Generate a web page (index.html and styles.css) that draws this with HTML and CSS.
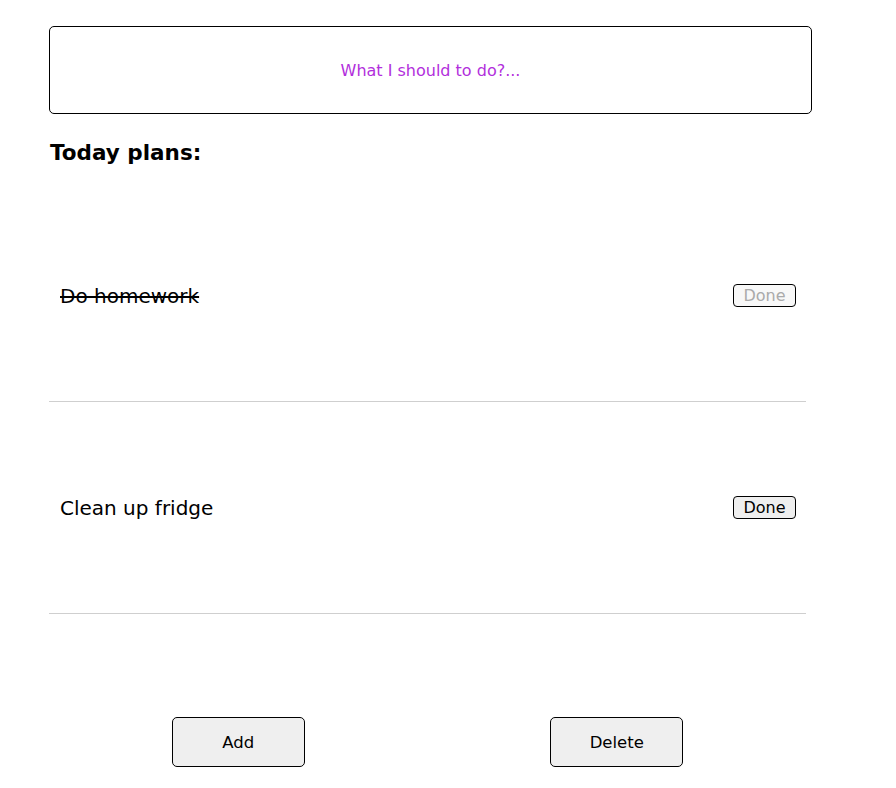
FILE: index.html
```html
<!DOCTYPE html>
<html>
<head>
<meta charset="utf-8">
<link rel="stylesheet" href="styles.css">
</head>
<body>
<div class="app">
  <input class="task-input" type="text" placeholder="What I should to do?...">
  <h2 class="title">Today plans:</h2>
  <ul class="list">
    <li class="item">
      <span class="item-text done">Do homework</span>
      <button class="done-btn" disabled>Done</button>
    </li>
    <li class="item">
      <span class="item-text">Clean up fridge</span>
      <button class="done-btn">Done</button>
    </li>
  </ul>
  <div class="actions">
    <button class="action-btn">Add</button>
    <button class="action-btn">Delete</button>
  </div>
</div>
</body>
</html>
```

FILE: styles.css
```css
* { box-sizing: border-box; }
html, body { margin: 0; padding: 0; background: #fff; }
body {
  font-family: "DejaVu Sans", "Open Sans", sans-serif;
  color: #000;
}
.app {
  width: 763px;
  margin: 26px 0 0 49px;
}
.task-input {
  display: block;
  width: 763px;
  height: 88px;
  border: 1px solid #000;
  border-radius: 5px;
  text-align: center;
  font-family: inherit;
  font-size: 16px;
  outline: none;
}
.task-input::placeholder { color: #b22fdc; opacity: 1; }
.title {
  margin: 26px 0 0 1px;
  font-size: 21.5px;
  font-weight: 700;
  line-height: 26px;
}
.list {
  list-style: none;
  margin: 24px 0 0 0;
  padding: 0;
  width: 757px;
}
.item {
  height: 212px;
  display: flex;
  align-items: center;
  justify-content: space-between;
  padding: 0 10px 0 11px;
  border-bottom: 1px solid #cfcfcf;
}
.item-text { font-size: 20px; }
.item-text.done { text-decoration: line-through; }
.done-btn {
  width: 63px;
  height: 23px;
  font-family: inherit;
  font-size: 16px;
  padding: 0;
  border: 1px solid #000;
  border-radius: 4px;
  background: #efefef;
  color: #000;
  line-height: 18px;
}
.done-btn:disabled { background: #f8f8f8; color: #aaa; }
.actions {
  width: 757px;
  display: flex;
  justify-content: space-around;
  margin-top: 103px;
}
.action-btn {
  width: 133px;
  height: 50px;
  font-family: inherit;
  font-size: 16.5px;
  border: 1px solid #000;
  border-radius: 5px;
  background: #efefef;
  color: #000;
}
```
